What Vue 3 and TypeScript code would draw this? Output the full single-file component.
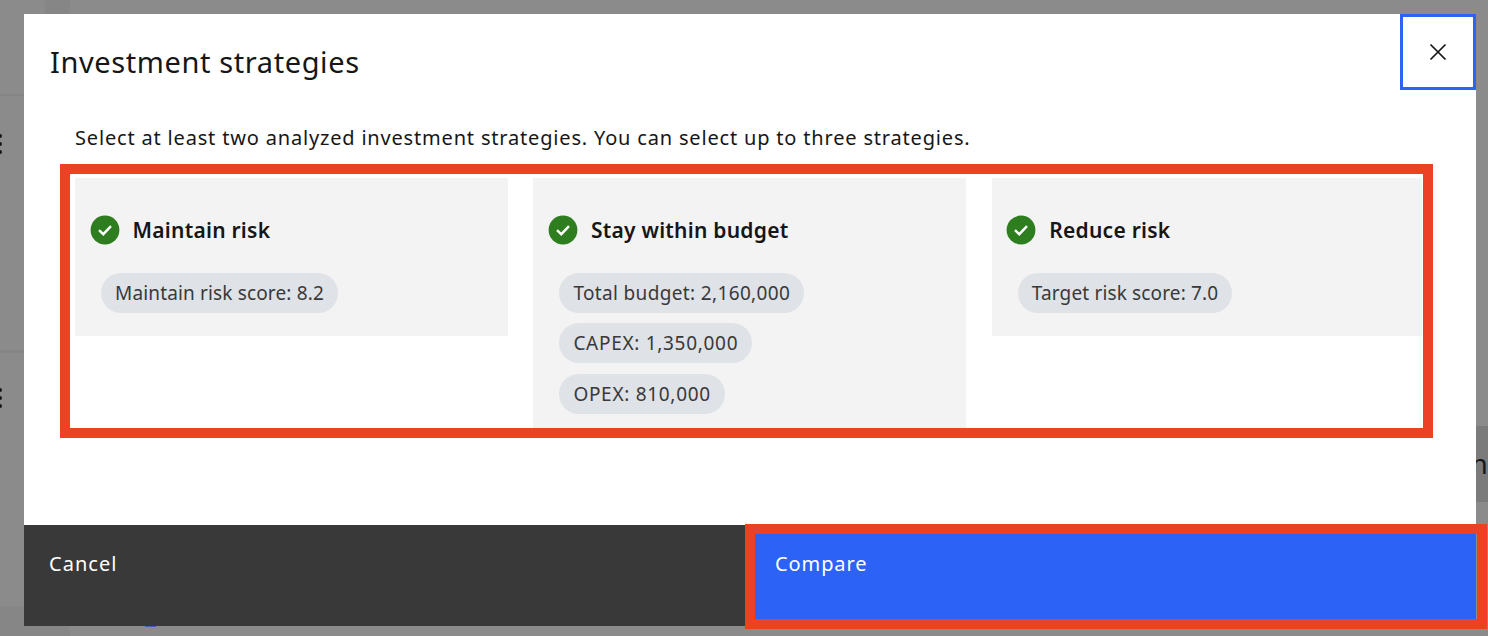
<script setup lang="ts">
interface Chip {
  text: string
  variant?: 'wide' | 'widest'
}
interface Strategy {
  name: string
  chips: Chip[]
}
const strategies: Strategy[] = [
  { name: 'Maintain risk', chips: [{ text: 'Maintain risk score: 8.2' }] },
  {
    name: 'Stay within budget',
    chips: [
      { text: 'Total budget: 2,160,000', variant: 'wide' },
      { text: 'CAPEX: 1,350,000', variant: 'widest' },
      { text: 'OPEX: 810,000', variant: 'widest' }
    ]
  },
  { name: 'Reduce risk', chips: [{ text: 'Target risk score: 7.0' }] }
]
</script>

<template>
  <div class="page">
    <div class="bg-band top"></div>
    <div class="bg-band rule-a"></div>
    <div class="bg-band rule-b"></div>
    <div class="bg-band low"></div>
    <div class="bg-band cell"></div>
    <div class="bg-band tick"></div>
    <span class="bg-dots dots-a"><i></i><i></i><i></i></span>
    <span class="bg-dots dots-b"><i></i><i></i><i></i></span>
    <span class="bg-letter">n</span>

    <section class="modal">
      <header class="head">
        <h2>Investment strategies</h2>
        <button class="close" aria-label="Close">
          <svg width="20" height="20" viewBox="0 0 20 20"><path d="M2.5 2.5 17.5 17.5M17.5 2.5 2.5 17.5" fill="none" stroke="#161616" stroke-width="1.7"/></svg>
        </button>
      </header>
      <div class="body">
        <p class="lead">Select at least two analyzed investment strategies. You can select up to three strategies.</p>
        <div class="cards">
          <article v-for="s in strategies" :key="s.name" class="card">
            <div class="card-title">
              <svg width="30" height="30" viewBox="0 0 30 30">
                <circle cx="15" cy="15" r="14.4" fill="#2e7d1e"/>
                <path d="M9 15.2 13.3 19.2 21 11.2" fill="none" stroke="#fff" stroke-width="2.4"/>
              </svg>
              <strong>{{ s.name }}</strong>
            </div>
            <div class="chips">
              <span v-for="c in s.chips" :key="c.text" class="chip" :class="c.variant">{{ c.text }}</span>
            </div>
          </article>
        </div>
      </div>
      <footer class="foot">
        <button class="btn cancel">Cancel</button>
        <button class="btn compare">Compare</button>
      </footer>
    </section>

    <div class="mark mark-cards"></div>
    <div class="mark mark-compare"></div>
  </div>
</template>

<style>
html, body { margin: 0; background: #8b8b8b; overflow: hidden; }
</style>

<style scoped>
.page {
  position: relative;
  box-sizing: border-box;
  width: 1488px;
  height: 636px;
  padding: 14px 12px 10px 24px;
  background: #8b8b8b;
  font-family: "Noto Sans", "Liberation Sans", sans-serif;
  overflow: hidden;
}
.bg-band { position: absolute; }
.top { left: 45px; top: 0; width: 25px; height: 14px; background: #868686; }
.rule-a { left: 0; top: 94px; width: 24px; height: 2px; background: #858585; }
.rule-b { left: 0; top: 350px; width: 24px; height: 3px; background: #858585; }
.low { left: 0; top: 606px; width: 70px; height: 30px; background: #868686; }
.cell { left: 1476px; top: 426px; width: 12px; height: 76px; background: #7b7b7b; }
.tick { left: 145px; top: 626px; width: 11px; height: 1px; background: #3f5fb0; }
.bg-dots { position: absolute; left: -2px; display: flex; flex-direction: column; gap: 4px; }
.bg-dots i { width: 4px; height: 4px; border-radius: 50%; background: #161616; }
.dots-a { top: 134px; }
.dots-b { top: 388px; }
.bg-letter { position: absolute; left: 1471px; top: 448px; font-size: 27px; line-height: 32px; color: #161616; }
.modal {
  position: relative;
  display: flex;
  flex-direction: column;
  width: 1452px;
  height: 612px;
  background: #fff;
  color: #161616;
}
.head {
  display: flex;
  justify-content: space-between;
  align-items: flex-start;
  height: 76px;
  padding-left: 26px;
}
h2 {
  margin: 30px 0 0;
  font-size: 29px;
  line-height: 36px;
  font-weight: 400;
  letter-spacing: 0.6px;
}
.close {
  box-sizing: border-box;
  width: 76px;
  height: 76px;
  padding: 0;
  display: flex;
  align-items: center;
  justify-content: center;
  background: #fff;
  border: 3px solid #2d62f6;
}
.body { flex: 1; min-height: 0; padding: 36px 54px 0 51px; overflow: hidden; }
.lead { margin: 0; font-size: 20px; line-height: 24px; letter-spacing: 0.82px; white-space: nowrap; }
.cards { display: flex; gap: 25.4px; margin-top: 28px; height: 250px; overflow: hidden; align-items: flex-start; }
.card { flex: 0 0 433px; box-sizing: border-box; padding: 36px 14.5px 23px; background: #f3f3f3; }
.card-title { display: flex; align-items: center; gap: 13px; height: 32px; }
.card-title strong { font-size: 21px; line-height: 28px; font-weight: 600; letter-spacing: 0.25px; }
.chips { display: flex; flex-direction: column; align-items: flex-start; gap: 10.4px; margin-top: 27px; padding-left: 11.5px; }
.chip {
  box-sizing: border-box;
  height: 40px;
  padding: 0 14px;
  border-radius: 20px;
  background: #dfe2e7;
  color: #393939;
  font-size: 19px;
  line-height: 40px;
  letter-spacing: 0.15px;
  white-space: nowrap;
}
.chip.wide { letter-spacing: 0.35px; }
.chip.widest { letter-spacing: 0.7px; }
.foot { display: flex; height: 101px; }
.btn {
  border: 0;
  padding: 27px 25px 0;
  font: inherit;
  font-size: 20px;
  line-height: 24px;
  letter-spacing: 0.9px;
  color: #fff;
  display: flex;
  align-items: flex-start;
}
.cancel { flex: 0 0 726px; box-sizing: border-box; background: #393939; letter-spacing: 1.05px; }
.compare { flex: 1; box-sizing: border-box; background: #2d62f6; padding-left: 20px; border-left: 5px solid #393939; }
.mark { position: absolute; box-sizing: border-box; border: 10px solid #ec4125; pointer-events: none; }
.mark-cards { left: 60px; top: 164px; width: 1373px; height: 274px; }
.mark-compare { left: 745px; top: 524px; width: 742px; height: 105px; }
</style>
